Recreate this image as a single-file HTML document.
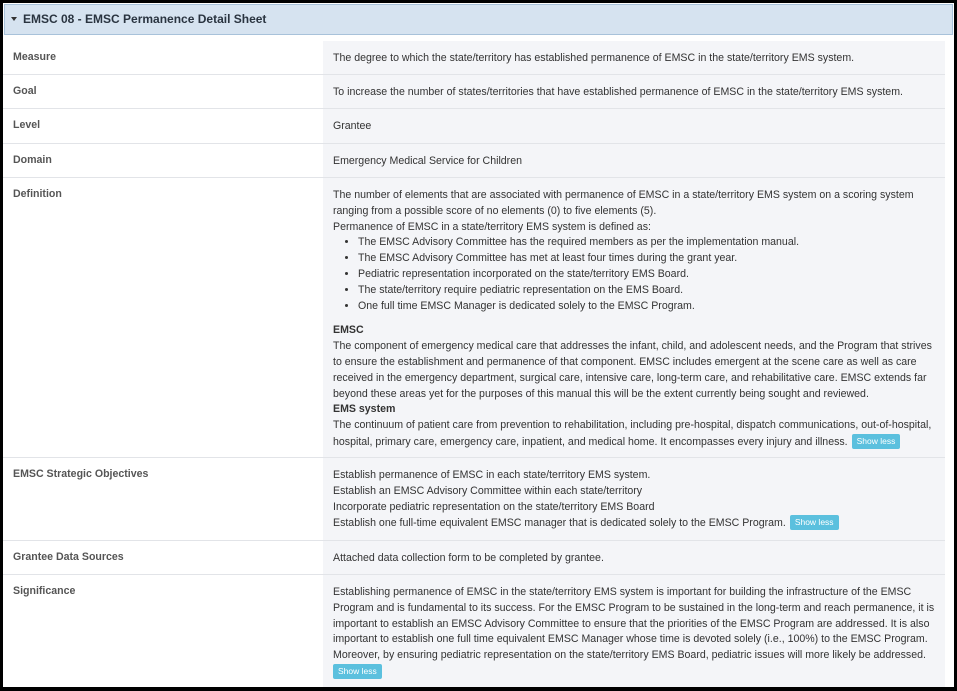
<!DOCTYPE html>
<html><head><style>
body{margin:0;width:957px;height:691px;overflow:hidden;background:#000;font-family:"Liberation Sans",Arial,sans-serif;}
#wrap{position:absolute;left:3px;top:3px;width:951px;height:684px;background:#fff;}
#hdr{position:absolute;left:1px;top:1px;width:947px;height:29px;background:#d6e3f0;border:1px solid #a8c2da;}
#hdr span{position:absolute;left:18px;top:7px;font-size:12px;font-weight:bold;color:#2a3440;}
#hdr i{position:absolute;left:6px;top:12px;width:0;height:0;border-left:3px solid transparent;border-right:3px solid transparent;border-top:4px solid #333;}
.row{position:absolute;left:0;width:942px;border-bottom:1px solid #e2e4e8;}
.lab{position:absolute;left:10px;top:10px;font-size:10.6px;font-weight:bold;color:#555;}
.val{position:absolute;left:320px;top:0;bottom:0;width:622px;background:#f4f5f8;}
.t{position:absolute;left:10px;top:10px;font-size:10.6px;line-height:15.8px;color:#333;white-space:nowrap;}
ul{margin:0;padding-left:25px;}
.b{display:inline-block;background:#5bc0de;color:#fff;font-size:8.5px;padding:2px 5px;border-radius:2px;line-height:11px;vertical-align:1px;margin-left:4px;}
</style></head><body><div id="wrap">
<div id="hdr"><i></i><span>EMSC 08 - EMSC Permanence Detail Sheet</span></div>
<div class="row" style="top:38px;height:33px"><div class="lab">Measure</div><div class="val"><div class="t">The degree to which the state/territory has established permanence of EMSC in the state/territory EMS system.</div></div></div>
<div class="row" style="top:72px;height:33px"><div class="lab">Goal</div><div class="val"><div class="t">To increase the number of states/territories that have established permanence of EMSC in the state/territory EMS system.</div></div></div>
<div class="row" style="top:106px;height:34px"><div class="lab">Level</div><div class="val"><div class="t">Grantee</div></div></div>
<div class="row" style="top:141px;height:33px"><div class="lab">Domain</div><div class="val"><div class="t">Emergency Medical Service for Children</div></div></div>
<div class="row" style="top:175px;height:279px"><div class="lab">Definition</div><div class="val"><div class="t">The number of elements that are associated with permanence of EMSC in a state/territory EMS system on a scoring system<br>ranging from a possible score of no elements (0) to five elements (5).<br>Permanence of EMSC in a state/territory EMS system is defined as:<ul><li>The EMSC Advisory Committee has the required members as per the implementation manual.</li><li>The EMSC Advisory Committee has met at least four times during the grant year.</li><li>Pediatric representation incorporated on the state/territory EMS Board.</li><li>The state/territory require pediatric representation on the EMS Board.</li><li>One full time EMSC Manager is dedicated solely to the EMSC Program.</li></ul><div style="height:9px"></div><b>EMSC</b><br>The component of emergency medical care that addresses the infant, child, and adolescent needs, and the Program that strives<br>to ensure the establishment and permanence of that component. EMSC includes emergent at the scene care as well as care<br>received in the emergency department, surgical care, intensive care, long-term care, and rehabilitative care. EMSC extends far<br>beyond these areas yet for the purposes of this manual this will be the extent currently being sought and reviewed.<br><b>EMS system</b><br>The continuum of patient care from prevention to rehabilitation, including pre-hospital, dispatch communications, out-of-hospital,<br>hospital, primary care, emergency care, inpatient, and medical home. It encompasses every injury and illness.<span class="b">Show less</span></div></div></div>
<div class="row" style="top:455px;height:82px"><div class="lab">EMSC Strategic Objectives</div><div class="val"><div class="t">Establish permanence of EMSC in each state/territory EMS system.<br>Establish an EMSC Advisory Committee within each state/territory<br>Incorporate pediatric representation on the state/territory EMS Board<br>Establish one full-time equivalent EMSC manager that is dedicated solely to the EMSC Program.<span class="b">Show less</span></div></div></div>
<div class="row" style="top:538px;height:33px"><div class="lab">Grantee Data Sources</div><div class="val"><div class="t">Attached data collection form to be completed by grantee.</div></div></div>
<div class="row" style="top:572px;height:112px;border:none"><div class="lab">Significance</div><div class="val"><div class="t">Establishing permanence of EMSC in the state/territory EMS system is important for building the infrastructure of the EMSC<br>Program and is fundamental to its success. For the EMSC Program to be sustained in the long-term and reach permanence, it is<br>important to establish an EMSC Advisory Committee to ensure that the priorities of the EMSC Program are addressed. It is also<br>important to establish one full time equivalent EMSC Manager whose time is devoted solely (i.e., 100%) to the EMSC Program.<br>Moreover, by ensuring pediatric representation on the state/territory EMS Board, pediatric issues will more likely be addressed.<br><span class="b" style="margin-left:0">Show less</span></div></div></div>
</div></body></html>
